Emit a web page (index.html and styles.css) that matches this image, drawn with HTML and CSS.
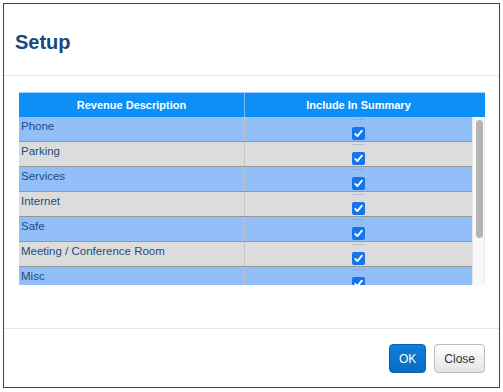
FILE: index.html
```html
<!DOCTYPE html>
<html lang="en">
<head>
  <meta charset="UTF-8">
  <meta name="viewport" content="width=device-width, initial-scale=1.0">
  <title>Setup</title>
  <link rel="stylesheet" href="styles.css">
</head>
<body>
  <div class="dialog">
    <div class="dialog-header">
      <h1>Setup</h1>
    </div>

    <div class="dialog-body">
      <div class="grid">
        <div class="grid-head">
          <div class="head-cell col-desc">Revenue Description</div>
          <div class="head-cell">Include In Summary</div>
        </div>

        <div class="grid-body">
          <div class="rows">
            <div class="row blue">
              <div class="cell col-desc">Phone</div>
              <div class="cell check-cell"><span class="dash"></span><span class="check"></span></div>
            </div>
            <div class="row gray">
              <div class="cell col-desc">Parking</div>
              <div class="cell check-cell"><span class="dash"></span><span class="check"></span></div>
            </div>
            <div class="row blue">
              <div class="cell col-desc">Services</div>
              <div class="cell check-cell"><span class="dash"></span><span class="check"></span></div>
            </div>
            <div class="row gray">
              <div class="cell col-desc">Internet</div>
              <div class="cell check-cell"><span class="dash"></span><span class="check"></span></div>
            </div>
            <div class="row blue">
              <div class="cell col-desc">Safe</div>
              <div class="cell check-cell"><span class="dash"></span><span class="check"></span></div>
            </div>
            <div class="row gray">
              <div class="cell col-desc">Meeting / Conference Room</div>
              <div class="cell check-cell"><span class="dash"></span><span class="check"></span></div>
            </div>
            <div class="row blue">
              <div class="cell col-desc">Misc</div>
              <div class="cell check-cell"><span class="dash"></span><span class="check"></span></div>
            </div>
          </div>
          <div class="scrollbar">
            <div class="thumb"></div>
          </div>
        </div>
      </div>
    </div>

    <div class="dialog-footer">
      <button class="btn btn-primary">OK</button>
      <button class="btn btn-default">Close</button>
    </div>
  </div>
</body>
</html>
```

FILE: styles.css
```css
body {
  margin: 0;
  padding: 3px;
  font-family: "Liberation Sans", Arial, sans-serif;
  background-color: #fff;
}
.dialog {
  box-sizing: border-box;
  width: 497px;
  height: 385px;
  border: 1px solid #2e4373;
  display: flex;
  flex-direction: column;
  background-color: #fff;
}
.dialog-header {
  height: 71px;
  padding: 0 11px;
  border-bottom: 1px solid #e5e5e5;
  display: flex;
  align-items: flex-start;
}
.dialog-header h1 {
  margin: 26px 0 0;
  font-size: 20px;
  line-height: 24px;
  font-weight: bold;
  color: #16497d;
}
.dialog-body {
  flex: 1;
  padding: 16px 14px 0 15px;
}
.grid {
  border-top: 1px solid #a9d2f8;
}
.grid-head {
  display: grid;
  grid-template-columns: 226px 1fr;
  padding-right: 13px;
  background-color: #0c8ff6;
  height: 24px;
}
.head-cell {
  box-sizing: border-box;
  color: #fff;
  font-size: 11px;
  font-weight: bold;
  text-align: center;
  line-height: 24px;
}
.head-cell.col-desc {
  border-right: 1px solid #7fbdf3;
}
.grid-body {
  display: flex;
  height: 168px;
}
.rows {
  flex: 1;
  overflow: hidden;
}
.row {
  display: grid;
  grid-template-columns: 226px 1fr;
  height: 25px;
  box-sizing: border-box;
  border-bottom: 1px solid #979797;
}
.row.blue {
  background-color: #92bff8;
}
.row.gray {
  background-color: #dcdcdc;
}
.cell {
  box-sizing: border-box;
  padding: 2px 2px 0;
  font-size: 11.5px;
  line-height: 14px;
  color: #1f4c7e;
}
.cell.col-desc {
  border-right: 1px solid #c4c4c4;
}
.check-cell {
  display: flex;
  flex-direction: column;
  align-items: center;
}
.dash {
  display: block;
  width: 13px;
  height: 1px;
  background-color: rgba(120, 130, 150, 0.3);
}
.check {
  display: block;
  width: 13px;
  height: 13px;
  margin-top: 7px;
  border-radius: 2px;
  background-color: #1673ee;
  background-image: url("data:image/svg+xml,%3Csvg xmlns='http://www.w3.org/2000/svg' viewBox='0 0 13 13'%3E%3Cpath d='M3.2 6.9 L5.4 9.1 L9.9 3.7' fill='none' stroke='white' stroke-width='1.9' stroke-linecap='round' stroke-linejoin='round'/%3E%3C/svg%3E");
}
.scrollbar {
  box-sizing: border-box;
  width: 13px;
  background-color: #f8f8f8;
  border-left: 1px solid #e6e6e6;
  border-right: 1px solid #ececec;
  padding: 3px 0 0 3px;
}
.thumb {
  width: 7px;
  height: 118px;
  border-radius: 4px;
  background-color: #b4b4b4;
}
.dialog-footer {
  height: 59px;
  border-top: 1px solid #e5e5e5;
  padding: 15px 14px 0 0;
  box-sizing: border-box;
  display: flex;
  justify-content: flex-end;
  align-items: flex-start;
  gap: 8px;
}
.btn {
  height: 29px;
  padding: 0 9px;
  border-radius: 4px;
  font-family: "Liberation Sans", Arial, sans-serif;
  font-size: 12px;
  cursor: pointer;
}
.btn-primary {
  background: linear-gradient(#0f7fd8, #0a6cc2);
  border: 1px solid #0862b2;
  color: #fff;
}
.btn-default {
  background: linear-gradient(#ffffff, #e4e4e4);
  border: 1px solid #bcbcbc;
  color: #333;
}
```
